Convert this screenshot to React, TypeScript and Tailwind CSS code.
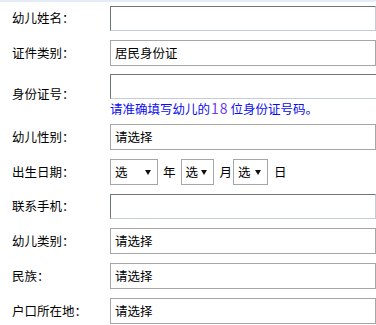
import React from "react";

const font = { fontFamily: '"Noto Sans CJK SC", "Liberation Sans", sans-serif' };

const Label = ({ text }: { text: string }) => (
  <div className="w-[110px] shrink-0 pl-[12px] text-[12.5px] leading-none text-black">{text}</div>
);

const TextBox = () => (
  <div className="h-[25px] w-[290px] border border-t-[#6f767b] border-l-[#6f767b] border-b-[#c4cbd9] border-r-[#c4cbd9] bg-white" />
);

const Select = ({ value }: { value: string }) => (
  <div className="flex h-[26px] w-[290px] items-center border border-[#a6a6a6] bg-white pl-[4px] text-[12.5px] text-black">
    {value}
  </div>
);

const Arrow = () => (
  <svg width="6" height="5" viewBox="0 0 6 5" className="shrink-0">
    <path d="M0 0h6L3 5z" fill="#111" />
  </svg>
);

const MiniSelect = ({ w }: { w: string }) => (
  <div className={`flex h-[26px] ${w} items-center justify-between border border-[#a6a6a6] bg-white pl-[4px] pr-[6px] text-[12.5px] text-black`}>
    <span>选</span>
    <Arrow />
  </div>
);

const Row = ({ label, mt, children }: { label: string; mt: string; children: React.ReactNode }) => (
  <div className={`flex items-center ${mt}`}>
    <Label text={label} />
    {children}
  </div>
);

export default function App() {
  return (
    <div className="h-[325px] w-[376px] overflow-hidden bg-white" style={font}>
      <div className="h-[2px] bg-[#e4edf7]" />
      <Row label="幼儿姓名：" mt="mt-[4px]">
        <TextBox />
      </Row>
      <Row label="证件类别：" mt="mt-[9px]">
        <Select value="居民身份证" />
      </Row>
      <div className="mt-[8px] flex items-center">
        <Label text="身份证号：" />
        <div className="flex flex-col">
          <TextBox />
          <div className="mt-[2px] h-[14px] whitespace-nowrap text-[12.5px] leading-[14px] text-[#0c0cf2]">
            请准确填写幼儿的<span className="pl-[1px] pr-[2px] text-[14px] tracking-[1px] text-[#6a3cf6]">18</span>位身份证号码。
          </div>
        </div>
      </div>
      <Row label="幼儿性别：" mt="mt-[9px]">
        <Select value="请选择" />
      </Row>
      <Row label="出生日期：" mt="mt-[9px]">
        <div className="flex items-center text-[12.5px] text-black">
          <MiniSelect w="w-[48px]" />
          <span className="mx-[5px]">年</span>
          <MiniSelect w="w-[33px]" />
          <span className="ml-[6px] mr-[1px]">月</span>
          <MiniSelect w="w-[35px]" />
          <span className="ml-[6px]">日</span>
        </div>
      </Row>
      <Row label="联系手机：" mt="mt-[9px]">
        <TextBox />
      </Row>
      <Row label="幼儿类别：" mt="mt-[9px]">
        <Select value="请选择" />
      </Row>
      <Row label="民族：" mt="mt-[9px]">
        <Select value="请选择" />
      </Row>
      <Row label="户口所在地：" mt="mt-[9px]">
        <Select value="请选择" />
      </Row>
    </div>
  );
}
